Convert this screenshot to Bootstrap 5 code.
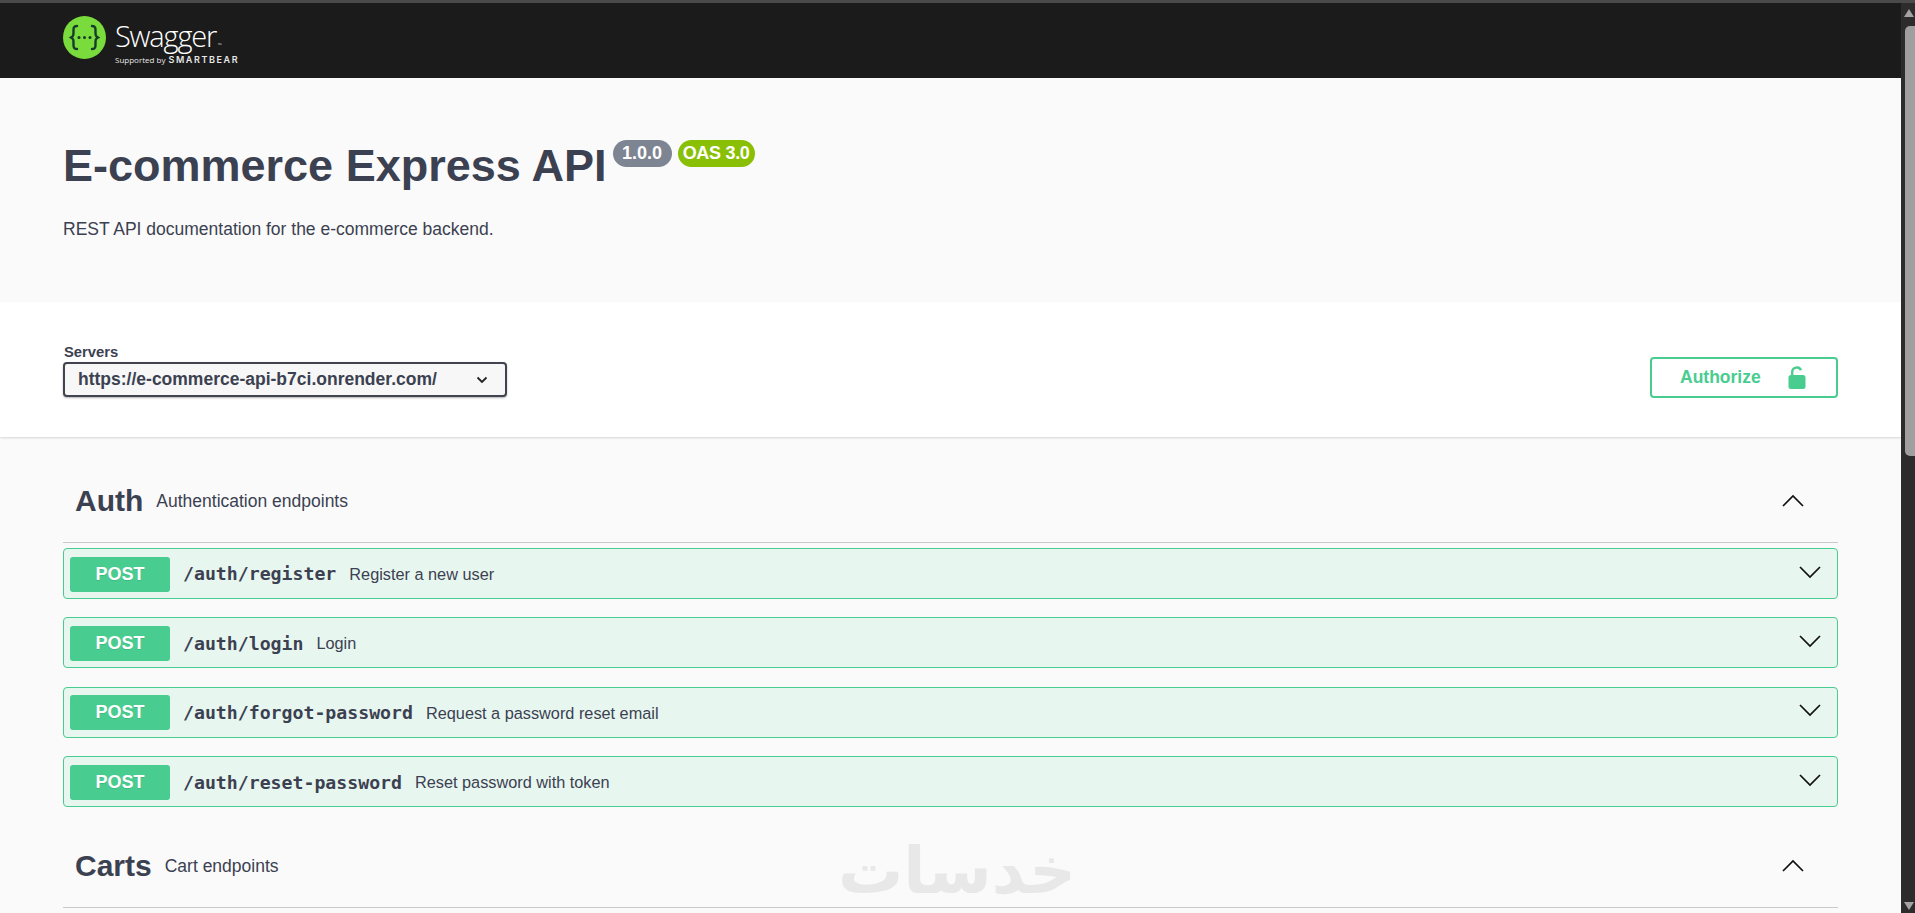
<!DOCTYPE html>
<html lang="en">
<head>
<meta charset="utf-8">
<title>Swagger UI</title>
<link href="https://cdn.jsdelivr.net/npm/bootstrap@5.3.0/dist/css/bootstrap.min.css" rel="stylesheet">
<style>
html,body{height:100%;overflow:hidden;margin:0}
body{font-family:"Liberation Sans",Arial,sans-serif;color:#3b4151;background:#fafafa}
.topline{height:3px;background:#4a4a4a}
.shell{height:910px}
.page{width:1901px;height:910px;overflow:hidden;position:relative;background:#fafafa}
.sbar{width:14px;background:#2c2c2c;position:relative}
.sb-up{width:0;height:0;margin:6px 0 0 3px;border-left:5.5px solid transparent;border-right:5.5px solid transparent;border-bottom:8px solid #a3a3a3}
.sb-thumb{width:10px;height:430px;margin:9px 0 0 4px;background:#9f9f9f;border-radius:5px 0 0 5px}
.sb-down{width:0;height:0;position:absolute;bottom:3px;left:3px;border-left:5.5px solid transparent;border-right:5.5px solid transparent;border-top:8px solid #a3a3a3}
.swg-head{height:75px;background:#1b1b1b;padding-left:63px;padding-top:13px}
.logo-word{margin-left:9px;color:#fff;line-height:1}
.wm-main{font-family:"Open Sans",sans-serif;font-weight:300;font-size:29px;letter-spacing:-1.2px;line-height:36px;height:36px;margin-top:2px}
.wm-tm{font-size:5px;letter-spacing:0;margin-left:2px}
.wm-sub{font-size:8px;font-family:"Open Sans",sans-serif;color:#e8e8e8;margin-top:1px;white-space:nowrap}
.wm-bear{font-family:"Inter",sans-serif;font-size:9px;font-weight:600;letter-spacing:1.6px;margin-left:1px}
.hero{height:224px;padding:62px 63px 0}
.api-title{font-size:45px;font-weight:700;line-height:52px;margin:0;color:#3b4151}
.ver{font-size:18px;font-weight:700;color:#fff;border-radius:57px;padding:3px 0;text-align:center;width:59px;line-height:21px;margin-top:0;margin-left:6px;background:#7d8492;height:27px}
.oas{background:#89bf04;margin-left:6px;width:77px;letter-spacing:-.3px}
.api-desc{font-size:17.5px;margin:26px 0 0;line-height:22px}
.srv{height:135px;background:#fff;box-shadow:0 1px 2px rgba(0,0,0,.15);padding:42px 63px 0;position:relative}
.srv-label{font-size:14.800px;font-weight:700;line-height:16px;margin-bottom:2px;margin-left:1px}
.srv-select{width:444px;height:35px;border:2px solid #41444e;border-radius:4px;background:#f7f7f7;box-shadow:0 1px 2px 0 rgba(0,0,0,.3);padding:0 17px 0 13px;font-size:17.5px;font-weight:700}
.auth-btn{width:188px;height:41px;border:2px solid #49cc90;border-radius:4px;color:#49cc90;font-size:17.5px;font-weight:700;padding-left:28px;margin-top:13px;background:#fff}
.auth-btn svg{margin-left:26px}
.tags{padding:0 63px}
.tag-row{height:106px;border-bottom:1px solid #c9c9cc;padding:0 12px 21px}
.tag-name{font-size:30px;font-weight:700;line-height:40px}
.tag-desc{font-size:17.5px;margin-left:13px;line-height:40px}
.tag-row svg{margin-right:21px;margin-bottom:14px}
.oper{height:51px;margin-bottom:18.400px;border:1px solid #49cc90;border-radius:4px;background:#e8f6f0;padding:1px 15px 0 6px}
.tag-row+.oper{margin-top:5px}
.oper svg{margin-bottom:3px}
.meth{width:100px;height:35px;background:#49cc90;border-radius:3px;color:#fff;font-size:18px;font-weight:700;text-shadow:0 1px 0 rgba(0,0,0,.1)}
.opath{font-family:"DejaVu Sans Mono",monospace;font-size:18.2px;font-weight:700;margin-left:13px;color:#3b4151}
.odesc{font-size:16.3px;margin-left:13px}
.tag2{margin-top:-23.400px}
.wmark{position:absolute;left:838px;top:833px;font-family:"DejaVu Sans",sans-serif;font-size:65px;line-height:70px;color:#e8e8e8;font-weight:700;pointer-events:none}
</style>
</head>
<body>
<div class="topline"></div>
<div class="shell d-flex">
<div class="page">
  <header class="swg-head d-flex align-items-start">
    <svg width="43" height="43" viewBox="0 0 43 43"><circle cx="21.5" cy="21.5" r="21.5" fill="#79dc3c"/><g fill="none" stroke="#173b2a" stroke-width="2.4" stroke-linecap="round"><path d="M14 10c-4 0-3.500 3-3.500 6s0 4-2.500 5.500c2.500 1.500 2.500 2.500 2.500 5.500s-.5 6 3.500 6"/><path d="M29 10c4 0 3.500 3 3.500 6s0 4 2.500 5.500c-2.500 1.500-2.500 2.500-2.500 5.500s.5 6-3.500 6"/></g><g fill="#173b2a"><circle cx="16" cy="21.500" r="1.500"/><circle cx="21.500" cy="21.500" r="1.500"/><circle cx="27" cy="21.500" r="1.500"/></g></svg>
    <div class="logo-word">
      <div class="wm-main">Swagger<span class="wm-tm">™</span></div>
      <div class="wm-sub">Supported by <span class="wm-bear">SMARTBEAR</span></div>
    </div>
  </header>
  <section class="hero">
    <div class="d-flex align-items-start">
      <h1 class="api-title">E-commerce Express API</h1>
      <span class="ver">1.0.0</span><span class="ver oas">OAS 3.0</span>
    </div>
    <p class="api-desc">REST API documentation for the e-commerce backend.</p>
  </section>
  <section class="srv d-flex justify-content-between align-items-start">
    <div>
      <div class="srv-label">Servers</div>
      <div class="srv-select d-flex align-items-center justify-content-between">
        <span>https://e-commerce-api-b7ci.onrender.com/</span>
        <svg width="12" height="8" viewBox="0 0 12 8"><path d="M1.500 1.500 6 6l4.500-4.500" fill="none" stroke="#222" stroke-width="1.800"/></svg>
      </div>
    </div>
    <div class="auth-btn d-flex align-items-center">
      <span>Authorize</span>
      <svg width="20" height="23" viewBox="0 0 20 23"><path d="M5.200 10V6.200a4.600 4.600 0 0 1 8.800-1.900" fill="none" stroke="#49cc90" stroke-width="2.400"/><rect x="1.500" y="9" width="17" height="14" rx="2.500" fill="#49cc90"/></svg>
    </div>
  </section>
  <main class="tags">
    <div class="tag-row d-flex align-items-end">
      <span class="tag-name">Auth</span><span class="tag-desc">Authentication endpoints</span>
      <svg class="ms-auto" width="24" height="14" viewBox="0 0 24 14"><path d="M2 13 12 3l10 10" fill="none" stroke="#111" stroke-width="1.700"/></svg>
    </div>
    <div class="oper d-flex align-items-center"><span class="meth d-flex align-items-center justify-content-center">POST</span><span class="opath">/auth/register</span><span class="odesc">Register a new user</span><svg class="ms-auto" width="24" height="14" viewBox="0 0 24 14"><path d="M2 1l10 10L22 1" fill="none" stroke="#111" stroke-width="1.700"/></svg></div>
    <div class="oper d-flex align-items-center"><span class="meth d-flex align-items-center justify-content-center">POST</span><span class="opath">/auth/login</span><span class="odesc">Login</span><svg class="ms-auto" width="24" height="14" viewBox="0 0 24 14"><path d="M2 1l10 10L22 1" fill="none" stroke="#111" stroke-width="1.700"/></svg></div>
    <div class="oper d-flex align-items-center"><span class="meth d-flex align-items-center justify-content-center">POST</span><span class="opath">/auth/forgot-password</span><span class="odesc">Request a password reset email</span><svg class="ms-auto" width="24" height="14" viewBox="0 0 24 14"><path d="M2 1l10 10L22 1" fill="none" stroke="#111" stroke-width="1.700"/></svg></div>
    <div class="oper d-flex align-items-center"><span class="meth d-flex align-items-center justify-content-center">POST</span><span class="opath">/auth/reset-password</span><span class="odesc">Reset password with token</span><svg class="ms-auto" width="24" height="14" viewBox="0 0 24 14"><path d="M2 1l10 10L22 1" fill="none" stroke="#111" stroke-width="1.700"/></svg></div>
    <div class="tag-row tag2 d-flex align-items-end">
      <span class="tag-name">Carts</span><span class="tag-desc">Cart endpoints</span>
      <svg class="ms-auto" width="24" height="14" viewBox="0 0 24 14"><path d="M2 13 12 3l10 10" fill="none" stroke="#111" stroke-width="1.700"/></svg>
    </div>
  </main>
  <div class="wmark" lang="fa" dir="rtl">خدسات</div>
</div>
<aside class="sbar"><div class="sb-up"></div><div class="sb-thumb"></div><div class="sb-down"></div></aside>
</div>
<script src="https://cdn.jsdelivr.net/npm/bootstrap@5.3.0/dist/js/bootstrap.bundle.min.js"></script>
</body>
</html>
